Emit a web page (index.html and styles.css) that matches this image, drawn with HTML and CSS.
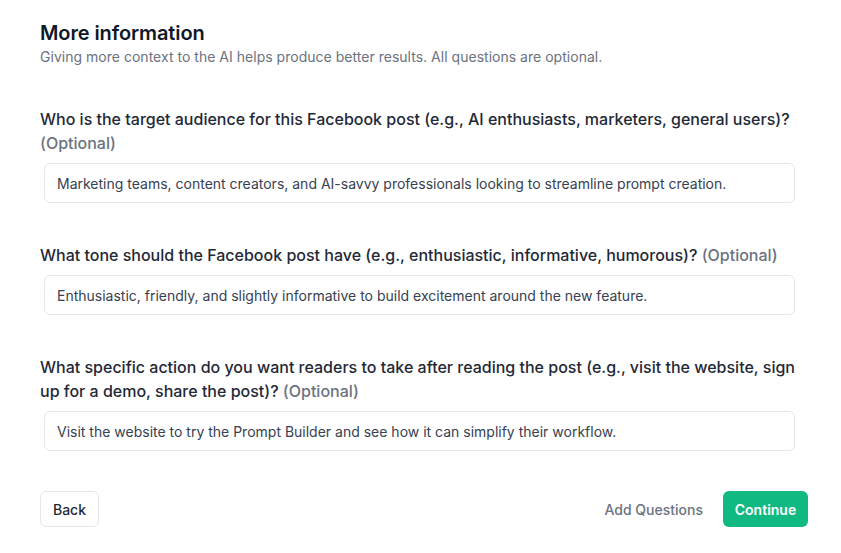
FILE: index.html
```html
<!DOCTYPE html>
<html>
<head>
<meta charset="utf-8">
<link rel="stylesheet" href="styles.css">
</head>
<body>
<main class="page">
  <header class="head">
    <h1 class="title">More information</h1>
    <p class="subtitle">Giving more context to the AI helps produce better results. All questions are optional.</p>
  </header>
  <section class="questions">
    <div class="question">
      <label class="label">Who is the target audience for this Facebook post (e.g., AI enthusiasts, marketers, general users)? <span class="opt">(Optional)</span></label>
      <div class="input">Marketing teams, content creators, and AI-savvy professionals looking to streamline prompt creation.</div>
    </div>
    <div class="question">
      <label class="label">What tone should the Facebook post have (e.g., enthusiastic, informative, humorous)? <span class="opt">(Optional)</span></label>
      <div class="input">Enthusiastic, friendly, and slightly informative to build excitement around the new feature.</div>
    </div>
    <div class="question">
      <label class="label">What specific action do you want readers to take after reading the post (e.g., visit the website, sign up for a demo, share the post)? <span class="opt">(Optional)</span></label>
      <div class="input">Visit the website to try the Prompt Builder and see how it can simplify their workflow.</div>
    </div>
  </section>
  <footer class="actions">
    <button class="btn btn-back">Back</button>
    <div class="right">
      <button class="btn btn-link">Add Questions</button>
      <button class="btn btn-primary">Continue</button>
    </div>
  </footer>
</main>
</body>
</html>
```
FILE: styles.css
```css
* { box-sizing: border-box; }
html, body { margin: 0; padding: 0; background: #fff; }
body { font-family: Inter, "Noto Sans", sans-serif; color: #1f2937; }
.page { width: 768px; margin-left: 40px; padding-top: 21px; }
.title { margin: 0; font-size: 20px; line-height: 24px; font-weight: 600; color: #111827; letter-spacing: -0.1px; }
.subtitle { margin: 2px 0 0; font-size: 14px; line-height: 20px; color: #6b7280; letter-spacing: 0.02px; }
.questions { margin-top: 40px; display: flex; flex-direction: column; gap: 40px; }
.question { display: flex; flex-direction: column; gap: 8px; }
.label { display: block; width: 762px; font-size: 16px; line-height: 24px; font-weight: 500; color: #1f2937; }
.opt { color: #6b7280; font-weight: 500; }
.input { margin-left: 4px; width: 751px; height: 40px; border: 1px solid #e5e7eb; border-radius: 6px; padding: 0 12px; display: flex; align-items: center; font-size: 14px; color: #374151; }
.actions { margin-top: 40px; display: flex; justify-content: space-between; align-items: center; }
.right { display: flex; align-items: center; gap: 20px; }
.btn { font-family: inherit; font-size: 14px; font-weight: 500; height: 36px; border-radius: 6px; cursor: pointer; }
.btn-back { width: 59px; background: #fff; border: 1px solid #e5e7eb; color: #1f2937; padding: 0; }
.btn-link { background: none; border: none; color: #6b7280; padding: 0; }
.btn-primary { width: 85px; background: #10b981; border: none; color: #fff; font-weight: 600; padding: 0; }
```
